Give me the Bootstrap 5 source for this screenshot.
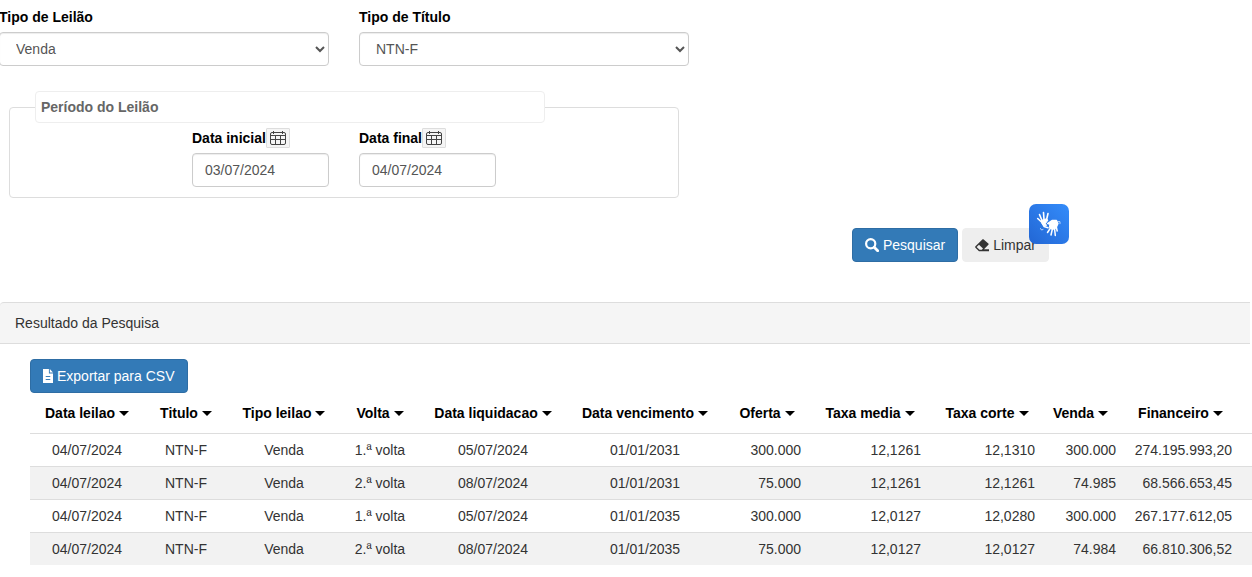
<!DOCTYPE html>
<html lang="pt">
<head>
<meta charset="utf-8">
<meta name="viewport" content="width=device-width, initial-scale=1">
<title>Leilões</title>
<link href="https://cdn.jsdelivr.net/npm/bootstrap@5.3.0/dist/css/bootstrap.min.css" rel="stylesheet">
<style>
  body { font: 14px/20px "Liberation Sans", Arial, sans-serif; color: #333; background: #fff; overflow-x: hidden; }
  .search-form { max-width: 1050px; margin-left: -1px; padding-top: 7px; }
  .search-form .row { --bs-gutter-x: 30px; }
  .search-form label { font-weight: 700; color: #000; }
  .field-label { display: block; margin-bottom: 5px; }
  .form-control, .form-control:focus { height: 34px; padding: 6px 12px; font-size: 14px; line-height: 20px; color: #555; border: 1px solid #ccc; border-radius: 4px; box-shadow: inset 0 1px 1px rgba(0,0,0,.075); }
  select.form-control { appearance: auto; }
  .period { margin: 25px 10px 0; border: 1px solid #ddd; border-radius: 4px; padding-bottom: 10px; }
  .period legend { width: 510px; margin: 0 0 0 25px; padding: 5px; border: 1px solid #eee; border-radius: 4px; background: #fff; font-size: 14px; line-height: 20px; font-weight: 700; color: #666; }
  .period .row { margin: 5px 0 0; }
  .date-head { height: 20px; margin-bottom: 5px; }
  .cal-btn { width: 24px; height: 20px; padding: 0; border: 1px solid #ddd; background: #f5f5f5; border-radius: 1px; }
  .btn { --bs-btn-font-size: 14px; --bs-btn-line-height: 20px; --bs-btn-padding-y: 6px; --bs-btn-padding-x: 12px; --bs-btn-border-radius: 4px; }
  .btn-primary { --bs-btn-bg: #337ab7; --bs-btn-border-color: #2e6da4; }
  .btn-clear { --bs-btn-bg: #eee; --bs-btn-color: #333; --bs-btn-border-color: #eee; }
  .actions { margin-top: 30px; gap: 4px; }
  .sign-widget { position: absolute; top: -24px; right: -20px; width: 40px; height: 40px; padding: 0; border: 0; border-radius: 7px; background: linear-gradient(45deg, #2266d4, #348cfa); }
  .results { margin-top: 40px; }
  .results-title { margin: 0 2px 0 0; padding: 10px 15px; font-size: 14px; line-height: 20px; font-weight: 400; background: #f5f5f5; border: solid #ddd; border-width: 1px 0; border-radius: 4px 0 0 0; }
  .results-body { padding: 15px 0 0 30px; }
  .results .table { table-layout: fixed; margin: 0; color: #333; }
  .results .table > * > tr > * { padding: 6px 9px; border: 0; white-space: nowrap; box-shadow: none; }
  .results .table > thead > tr > th { padding: 10px 0; text-align: center; }
  .results .table > thead > tr > th:nth-last-child(-n+2) { padding-right: 8px; }
  .results .table > thead > tr > th:last-child { padding-right: 16px; }
  .results .table > tbody > tr > td { border-top: 1px solid #ddd; color: #333; }
  .results .table > tbody > tr > td:last-child { padding-right: 20px; }
  .results .table > tbody > tr:nth-child(even) > td { background: #f2f2f2; }
  .sort-btn { display: block; width: 100%; padding: 0; border: 0; background: none; font-weight: 700; color: #000; line-height: 20px; }
  .sort-btn::after { content: ""; display: inline-block; margin-left: 4px; border: solid transparent; border-width: 5px 5px 0; border-top-color: #000; vertical-align: 2px; }
</style>
</head>
<body>
<form class="search-form">
  <div class="row">
    <div class="col-4">
      <label class="field-label" for="tipoLeilao">Tipo de Leilão</label>
      <select class="form-control" id="tipoLeilao"><option>Venda</option><option>Compra</option></select>
    </div>
    <div class="col-4">
      <label class="field-label" for="tipoTitulo">Tipo de Título</label>
      <select class="form-control" id="tipoTitulo"><option>NTN-F</option><option>LTN</option></select>
    </div>
  </div>
  <div class="row">
    <div class="col-8">
      <fieldset class="period">
        <legend class="float-none">Período do Leilão</legend>
        <div class="row">
          <div class="col-3 offset-3">
            <div class="date-head d-flex">
              <label for="dataInicial">Data inicial</label>
              <button type="button" class="cal-btn d-flex align-items-center justify-content-center" aria-label="Escolher data inicial">
                <svg width="16" height="14" viewBox="0 0 16 14" fill="none" stroke="#444"><rect x=".5" y="1.5" width="15" height="12" rx="1.5"/><path d="M.5 4.5h15M.5 8.500h15M5.5 4.5v9M10.5 4.5v9M3.5 0v3M12.5 0v3"/></svg>
              </button>
            </div>
            <input class="form-control" id="dataInicial" type="text" value="03/07/2024">
          </div>
          <div class="col-3">
            <div class="date-head d-flex">
              <label for="dataFinal">Data final</label>
              <button type="button" class="cal-btn d-flex align-items-center justify-content-center" aria-label="Escolher data final">
                <svg width="16" height="14" viewBox="0 0 16 14" fill="none" stroke="#444"><rect x=".5" y="1.5" width="15" height="12" rx="1.5"/><path d="M.5 4.5h15M.5 8.500h15M5.5 4.5v9M10.5 4.5v9M3.5 0v3M12.5 0v3"/></svg>
              </button>
            </div>
            <input class="form-control" id="dataFinal" type="text" value="04/07/2024">
          </div>
        </div>
      </fieldset>
    </div>
  </div>
  <div class="actions d-flex justify-content-end position-relative">
    <button type="button" class="btn btn-primary d-flex align-items-center gap-1">
      <svg width="14" height="14" viewBox="0 0 14 14" fill="none" stroke="#fff"><circle cx="5.700" cy="5.700" r="4.600" stroke-width="2.200"/><path d="M9.200 9.200l3.500 3.500" stroke-width="2.800" stroke-linecap="round"/></svg>
      Pesquisar
    </button>
    <button type="reset" class="btn btn-clear d-flex align-items-center gap-1">
      <svg width="14" height="14" viewBox="0 0 14 14"><path d="M7.6 1.2h.8l5.2 4.6v.8L9 11.2H14v2H4L.2 9.600v-1.200z" fill="#333"/><path d="M1.600 9.100l2.400-2.300 4 3.800-1.200 1.100H4.500z" fill="#eee"/></svg>
      Limpar
    </button>
    <button type="button" class="sign-widget" aria-label="Língua gestual">
      <svg class="d-block" width="40" height="40" viewBox="0 0 40 40" fill="none" stroke="#fff" stroke-linecap="round" stroke-linejoin="round">
        <path d="M12.500 16.500l4-1.500 2.500 1-2.500 3.500 1 2-2 .5-2-2z" fill="#fff" stroke-width="1"/>
        <path d="M12.500 18l-3.800-3.500M13 16.500l-2.500-6M15 15.500l-.5-7M17.500 16l1.500-6.500" stroke-width="1.600"/>
        <path d="M13 19l2 3.500 4 1.200" stroke-width="1.500"/>
        <path d="M18.500 19.500l4.500-3h4.500l1.500 3-2 4.500-3.500 1.500-3-2.500.5-2.500z" fill="#fff" stroke-width="1.300"/>
        <path d="M21.500 24l-3 4.500M23.500 24.500l-1.500 6.500M25.500 24l.8 7.500M27 21.500l1.200 5.500" stroke-width="1.500"/>
        <path d="M11.500 24.500l1 1.500 1.500-.5M29 17.500l2 .2v2" stroke-width="1" opacity=".65"/>
      </svg>
    </button>
  </div>
</form>

<section class="results">
  <h2 class="results-title">Resultado da Pesquisa</h2>
  <div class="results-body">
    <button type="button" class="btn btn-primary d-flex align-items-center gap-1">
      <svg width="10" height="14" viewBox="0 0 11 14" preserveAspectRatio="none"><path d="M0 0h6.500v4.500H11V14H0zM7.500 0L11 3.500H7.500z" fill="#fff"/><path d="M3 7.500h5M3 10.500h5" stroke="#337ab7"/></svg>
      Exportar para CSV
    </button>
    <table class="table">
      <colgroup>
        <col style="width:114px"><col style="width:84px"><col style="width:112px"><col style="width:80px"><col style="width:146px"><col style="width:158px"><col style="width:86px"><col style="width:120px"><col style="width:114px"><col style="width:81px"><col style="width:127px">
      </colgroup>
      <thead>
        <tr>
          <th><button class="sort-btn">Data leilao</button></th>
          <th><button class="sort-btn">Titulo</button></th>
          <th><button class="sort-btn">Tipo leilao</button></th>
          <th><button class="sort-btn">Volta</button></th>
          <th><button class="sort-btn">Data liquidacao</button></th>
          <th><button class="sort-btn">Data vencimento</button></th>
          <th><button class="sort-btn">Oferta</button></th>
          <th><button class="sort-btn">Taxa media</button></th>
          <th><button class="sort-btn">Taxa corte</button></th>
          <th><button class="sort-btn">Venda</button></th>
          <th><button class="sort-btn">Financeiro</button></th>
        </tr>
      </thead>
      <tbody class="text-center">
        <tr><td>04/07/2024</td><td>NTN-F</td><td>Venda</td><td>1.ª volta</td><td>05/07/2024</td><td>01/01/2031</td><td class="text-end">300.000</td><td class="text-end">12,1261</td><td class="text-end">12,1310</td><td class="text-end">300.000</td><td class="text-end">274.195.993,20</td></tr>
        <tr><td>04/07/2024</td><td>NTN-F</td><td>Venda</td><td>2.ª volta</td><td>08/07/2024</td><td>01/01/2031</td><td class="text-end">75.000</td><td class="text-end">12,1261</td><td class="text-end">12,1261</td><td class="text-end">74.985</td><td class="text-end">68.566.653,45</td></tr>
        <tr><td>04/07/2024</td><td>NTN-F</td><td>Venda</td><td>1.ª volta</td><td>05/07/2024</td><td>01/01/2035</td><td class="text-end">300.000</td><td class="text-end">12,0127</td><td class="text-end">12,0280</td><td class="text-end">300.000</td><td class="text-end">267.177.612,05</td></tr>
        <tr><td>04/07/2024</td><td>NTN-F</td><td>Venda</td><td>2.ª volta</td><td>08/07/2024</td><td>01/01/2035</td><td class="text-end">75.000</td><td class="text-end">12,0127</td><td class="text-end">12,0127</td><td class="text-end">74.984</td><td class="text-end">66.810.306,52</td></tr>
      </tbody>
    </table>
  </div>
</section>
<script src="https://cdn.jsdelivr.net/npm/bootstrap@5.3.0/dist/js/bootstrap.bundle.min.js"></script>
</body>
</html>
